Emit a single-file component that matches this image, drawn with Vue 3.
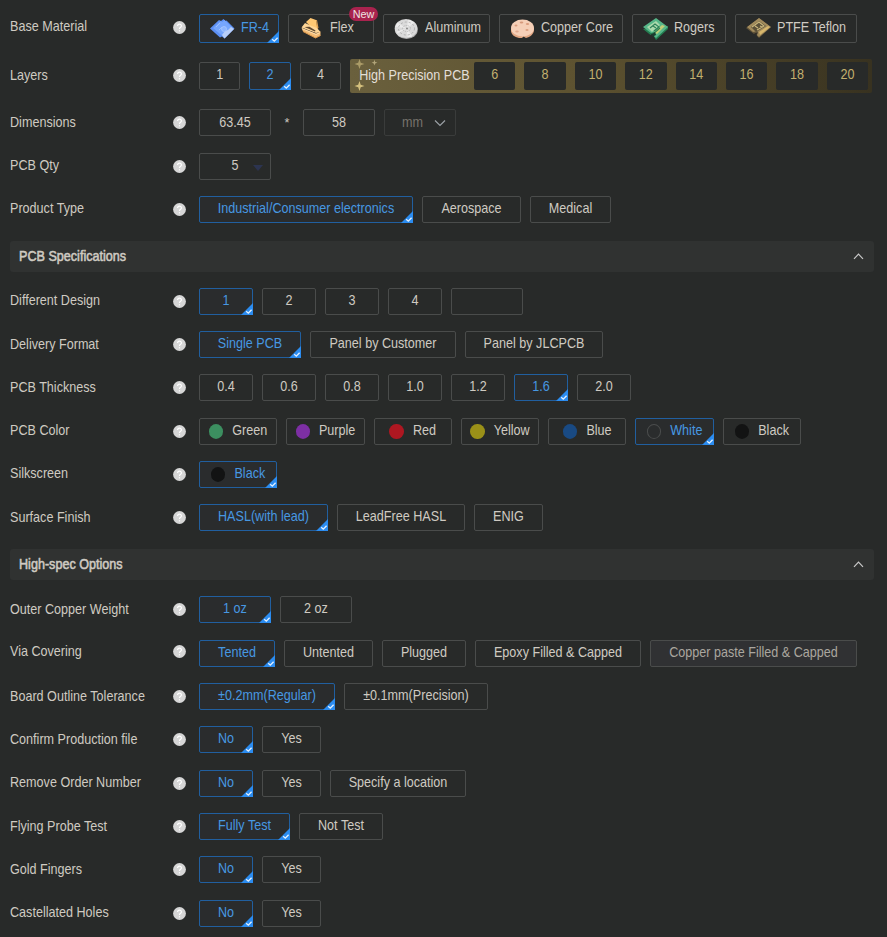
<script setup>
const list = (active, items) => items.map(([text, width, extra]) => ({ text, width, active: text === active, ...extra }))
const c = (swatch) => ({ swatch })

const materials = list('FR-4', [
  ['FR-4', 80, { icon: 'fr4' }],
  ['Flex', 86, { icon: 'flex', badge: 'New' }],
  ['Aluminum', 107, { icon: 'aluminum' }],
  ['Copper Core', 124, { icon: 'copper' }],
  ['Rogers', 94, { icon: 'rogers' }],
  ['PTFE Teflon', 122, { icon: 'ptfe' }]
])
const layers = list('2', [['1', 41.4], ['2', 41.4], ['4', 41.4]])
const precisionLayers = [6, 8, 10, 12, 14, 16, 18, 20]

const sections = [
  {
    key: 'basic',
    rows: [
      { label: 'Base Material', kind: 'material', options: materials },
      { label: 'Layers', kind: 'layers', options: layers },
      { label: 'Dimensions', kind: 'dimensions', options: [] },
      { label: 'PCB Qty', kind: 'qty', options: [] },
      {
        label: 'Product Type',
        kind: 'type',
        options: list('Industrial/Consumer electronics', [['Industrial/Consumer electronics', 214], ['Aerospace', 99], ['Medical', 81]])
      }
    ]
  },
  {
    key: 'spec',
    title: 'PCB Specifications',
    rows: [
      { label: 'Different Design', kind: 'design', options: list('1', [['1', 54], ['2', 54], ['3', 54], ['4', 54], ['', 72]]) },
      { label: 'Delivery Format', options: list('Single PCB', [['Single PCB', 102], ['Panel by Customer', 146], ['Panel by JLCPCB', 138]]) },
      { label: 'PCB Thickness', options: list('1.6', ['0.4', '0.6', '0.8', '1.0', '1.2', '1.6', '2.0'].map((t) => [t, 54])) },
      {
        label: 'PCB Color',
        options: list('White', [
          ['Green', 78.3, c('green')],
          ['Purple', 78.3, c('purple')],
          ['Red', 78.3, c('red')],
          ['Yellow', 78.3, c('yellow')],
          ['Blue', 78.3, c('blue')],
          ['White', 78.3, c('clear')],
          ['Black', 78.3, c('black')]
        ])
      },
      { label: 'Silkscreen', options: list('Black', [['Black', 78.3, c('black')]]) },
      { label: 'Surface Finish', options: list('HASL(with lead)', [['HASL(with lead)', 129], ['LeadFree HASL', 128], ['ENIG', 69]]) }
    ]
  },
  {
    key: 'high',
    title: 'High-spec Options',
    rows: [
      { label: 'Outer Copper Weight', options: list('1 oz', [['1 oz', 72], ['2 oz', 72]]) },
      {
        label: 'Via Covering',
        kind: 'via',
        options: list('Tented', [
          ['Tented', 76],
          ['Untented', 89],
          ['Plugged', 84],
          ['Epoxy Filled & Capped', 166],
          ['Copper paste Filled & Capped', 207, { muted: true }]
        ])
      },
      { label: 'Board Outline Tolerance', options: list('±0.2mm(Regular)', [['±0.2mm(Regular)', 136], ['±0.1mm(Precision)', 144]]) },
      { label: 'Confirm Production file', options: list('No', [['No', 54], ['Yes', 59]]) },
      { label: 'Remove Order Number', options: list('No', [['No', 54], ['Yes', 59], ['Specify a location', 136]]) },
      { label: 'Flying Probe Test', options: list('Fully Test', [['Fully Test', 91], ['Not Test', 84]]) },
      { label: 'Gold Fingers', options: list('No', [['No', 54], ['Yes', 59]]) },
      { label: 'Castellated Holes', options: list('No', [['No', 54], ['Yes', 59]]) }
    ]
  }
]
</script>

<template>
  <main class="form">
    <section v-for="section in sections" :key="section.key" :class="['section', section.key]">
      <header v-if="section.title" class="bar">
        <h2>{{ section.title }}</h2>
        <svg class="fold" width="11" height="7" viewBox="0 0 11 7"><path d="M1 5.8 5.5 1.2 10 5.8" /></svg>
      </header>
      <div v-for="row in section.rows" :key="row.label" :class="['row', row.kind]">
        <span class="label">{{ row.label }}</span>
        <svg class="help" width="13" height="13" viewBox="0 0 13 13">
          <circle cx="6.5" cy="6.5" r="6.4" />
          <path d="M4.6 5.1C4.6 2.5 8.5 2.6 8.4 5 8.3 6.4 6.5 6.3 6.5 8" />
          <path d="M6.5 9.2v1.2" />
        </svg>
        <div class="options">
          <div
            v-for="(o, i) in row.options"
            :key="i"
            :class="['option', { active: o.active, muted: o.muted }]"
            :style="{ width: o.width + 'px' }"
          >
            <svg v-if="o.icon" class="material-icon" width="27" height="22" viewBox="0 0 27 22">
              <g v-if="o.icon === 'fr4'">
                <path d="M1 10.500 10 2l2 1 2.500-2 2 2 1-.5 8 8-10 10-2.500-2-2 1z" fill="#5c8ff4" />
                <path d="m4 10 7.500-7 2 1 2-2 8 8-9 9z" fill="#76a6fd" />
                <path d="m13 17 3-4 3-1 3-3 3 2-9.500 9.500z" fill="#b9cff9" />
                <path d="m7 9 4-4m-1 7 3-3" stroke="#9dc0ff" fill="none" />
                <circle cx="15" cy="11" r="2.500" fill="#8cb5ff" stroke="#a8c8ff" stroke-width=".8" />
              </g>
              <g v-else-if="o.icon === 'flex'">
                <path d="M8 4 12.500 0 18 2l1.500 9-7-2.500z" fill="#ffc873" />
                <path d="m18 2 1 0 1.500 8-1.500 1z" fill="#e0a256" />
                <path d="M3.500 9.500 7 5l5.500 2.500L19 10l3.500 4-4.500 1z" fill="#ffd697" />
                <path d="m6.500 9 5-.2 6 3.800-.5 1z" fill="#5e4830" />
                <path d="M3.500 10 18 15.500l4.500-2v4l-5 2.500L5 13.500z" fill="#f4bc76" />
                <path d="m5 13.500 12.500 6.500 5-2.500" stroke="#d8954a" fill="none" />
                <path d="m4 10.500 14 6 4-1.800" stroke="#ffe3b6" stroke-width=".8" fill="none" />
              </g>
              <g v-else-if="o.icon === 'aluminum'">
                <ellipse cx="13.500" cy="11.500" rx="11.3" ry="9.500" fill="#aaa" />
                <ellipse cx="13" cy="10.500" rx="11.3" ry="9.500" fill="#dadada" />
                <path d="m13.500 10.500 2-9 6 3zm0 0-9-6-2 4zm0 0 6 8-5 1zm0 0-9 5-1-2z" fill="#f4f4f4" opacity=".7" />
                <ellipse cx="13.500" cy="10.500" rx="8" ry="6.500" fill="none" stroke="#a5a5a5" stroke-width=".8" stroke-dasharray="2 2" />
                <ellipse cx="13.500" cy="10.500" rx="4" ry="3" fill="none" stroke="#aaa" stroke-width=".8" stroke-dasharray="1 1" />
                <circle cx="14" cy="10.500" r="1" fill="#888" />
              </g>
              <g v-else-if="o.icon === 'copper'">
                <path d="M2 10.500v3C3 18 8 20.500 13 20l1.500-1.500L17 20c4-.8 8-4 8-8v-2z" fill="#e2a783" />
                <ellipse cx="13.500" cy="10" rx="11.500" ry="8.500" fill="#f5cfb7" />
                <ellipse cx="12.500" cy="4.500" rx="1.800" ry="1" fill="#d5997b" />
                <ellipse cx="18.500" cy="6" rx="1.700" ry="1.100" fill="#da9c7c" />
                <ellipse cx="7" cy="7.500" rx="1.500" ry="1" fill="#d99c7d" />
                <ellipse cx="18" cy="12" rx="1.600" ry="1" fill="#dda182" />
                <ellipse cx="8" cy="13.500" rx="1.800" ry="1" fill="#e1a98d" />
              </g>
              <g v-else-if="o.icon === 'rogers'">
                <path d="m1 11 7.500 6 2-1.500 1.500 3 2 3.500 12-11v-3z" fill="#237d50" />
                <path d="M1 9 14 0l12 9-12 11-3-3 2-3-4 1z" fill="#57b789" />
                <path d="m5 9 9-6 4 4-8 7z" fill="#abd9ac" />
                <path d="m15 16 8-8-3-1-8 7z" fill="#c1cf78" />
                <path d="m8 10 5-4 4 3-5 4m-1-5 3 2m-3 6 7-6" stroke="#2c8058" stroke-width="1.1" fill="none" />
                <path d="m9 17 4-3 1 3-3 1.500z" fill="#1b3c2e" />
              </g>
              <g v-else>
                <path d="m1 10 8 6 2-1 1 3 2 2L26 9 14 0z" fill="#5f5239" />
                <path d="M2 9 14 0l12 9-12 10-3-3 2-3-5 1z" fill="#a28b5c" />
                <path d="m6 9 8-6 7 5-10 6z" fill="#5b5038" />
                <path d="m7 9 7-5 5 4-7 4m-2-4 3 2m2-2 2 1" stroke="#cbb77d" stroke-width="1.1" fill="none" />
                <path d="m15 17 10-8-2-1-9 6z" fill="#d7b66b" />
                <path d="m9 16 4-2-1 3z" fill="#302c25" />
              </g>
            </svg>
            <i v-if="o.swatch" :class="['swatch', o.swatch]"></i>
            <span class="text">{{ o.text }}</span>
            <span v-if="o.badge" class="badge">{{ o.badge }}</span>
            <svg v-if="o.active" class="tick" width="12" height="12" viewBox="0 0 12 12">
              <path class="corner" d="M0 12 12 0v12z" />
              <path class="mark" d="M5.200 8.300 7.300 10.200 10.600 6.800" />
            </svg>
          </div>

          <div v-if="row.kind === 'layers'" class="precision">
            <svg class="stars" width="28" height="34" viewBox="0 0 28 34">
              <path d="M9.5 0l1.2 3.7L14.5 5l-3.8 1.2L9.5 10 8.2 6.2 4.5 5l3.7-1.3z" fill="#aa9b67" />
              <path d="M24.5.8l.7 2.1 2.2.7-2.2.8-.7 2.1-.8-2.1-2.1-.8 2.1-.7z" fill="#b2a57a" />
              <path d="M9.5 22l1.2 3.7 3.8 1.3-3.8 1.2L9.500 32l-1.3-3.8L4.5 27l3.7-1.3z" fill="#d4c07d" />
            </svg>
            <span class="text title">High Precision PCB</span>
            <div class="chips">
              <div v-for="n in precisionLayers" :key="n" class="chip"><span class="text">{{ n }}</span></div>
            </div>
          </div>

          <template v-if="row.kind === 'dimensions'">
            <div class="option field"><span class="text">63.45</span></div>
            <span class="times">*</span>
            <div class="option field"><span class="text">58</span></div>
            <div class="option field unit">
              <span class="text">mm</span>
              <svg width="12" height="8" viewBox="0 0 12 8"><path d="M1 1.5 6 6.5 11 1.5" /></svg>
            </div>
          </template>

          <div v-if="row.kind === 'qty'" class="option field quantity">
            <span class="text">5</span>
            <i class="caret"></i>
          </div>
        </div>
      </div>
    </section>
  </main>
</template>

<style>
body {
  margin: 0;
  background: #282a29;
}
</style>

<style scoped>
.form {
  box-sizing: border-box;
  width: 887px;
  height: 937px;
  overflow: hidden;
  padding: 14px 13px 0 10px;
  background: #282a29;
  color: #cfcac2;
  font: 12.6px/16px "Liberation Sans", Arial, sans-serif;
  white-space: nowrap;
}
.row {
  display: flex;
  align-items: center;
  height: 27px;
}
.basic .row + .row {
  margin-top: 16px;
}
.basic .row.material {
  height: 29px;
}
.basic .row.layers {
  height: 34px;
}
.basic .row.qty {
  margin-top: 17px;
}
.bar {
  display: flex;
  align-items: center;
  justify-content: space-between;
  box-sizing: border-box;
  height: 31px;
  margin-top: 18px;
  padding: 0 10px 0 9px;
  border-radius: 3px;
  background: #303231;
}
.bar h2 {
  margin: 0;
  font-size: 12.6px;
  font-weight: 400;
  -webkit-text-stroke: 0.5px #cfcac2;
}
.label,
.text,
.bar h2 {
  transform: translateY(0.7px) scaleY(1.09);
  transform-origin: 0 12.4px;
}
.label {
  transform: translateY(1px) scaleY(1.09);
}
.qty .label,
.type .label {
  transform: translateY(0.5px) scaleY(1.09);
}
.bar h2,
.material .label,
.material .text,
.layers .text {
  transform: scaleY(1.09);
}
.fold path {
  fill: none;
  stroke: #c9c9c9;
  stroke-width: 1.2;
}
.spec .bar + .row {
  margin-top: 15.95px;
}
.spec .row + .row {
  margin-top: 16.22px;
}
.high .bar + .row {
  margin-top: 16.3px;
}
.high .row + .row {
  margin-top: 16.35px;
}
.label {
  width: 163px;
  padding-bottom: 2px;
}
.material .label {
  padding-bottom: 3px;
}
.help {
  flex: none;
  margin-right: 13px;
}
.material .help,
.layers .help {
  margin-bottom: 1px;
}
.material .help {
  margin-bottom: 3px;
}
.via .label {
  padding-bottom: 5px;
}
.via .help {
  margin-bottom: 4px;
}
.help circle {
  fill: #d6d6d6;
}
.help path {
  fill: none;
  stroke: #fff;
  stroke-width: 1.2;
}
.options {
  display: flex;
  align-items: center;
  gap: 9px;
}
.option {
  position: relative;
  display: flex;
  align-items: center;
  justify-content: center;
  box-sizing: border-box;
  height: 27px;
  border: 1px solid #4a4c4b;
  border-radius: 2px;
}
.text {
  padding-bottom: 3px;
}
.option.active {
  border-color: #215f9f;
  background: #2a2c2d;
  color: #4798e2;
}
.option.muted {
  background: #303133;
  color: #aaa69f;
}
.material .option {
  justify-content: flex-start;
  height: 29px;
  padding-left: 9px;
}
.material .text {
  padding-bottom: 2px;
}
.layers .option {
  height: 28px;
}
.material-icon {
  flex: none;
  margin-right: 5px;
}
.tick {
  position: absolute;
  right: -1px;
  bottom: -1px;
}
.tick .corner {
  fill: #2b8cf0;
}
.tick .mark {
  fill: none;
  stroke: #e4f1ff;
  stroke-width: 1.3;
}
.badge {
  position: absolute;
  top: -8px;
  right: -5px;
  width: 29px;
  height: 14px;
  border-radius: 7px;
  background: #a9234e;
  color: #eee6e2;
  font-size: 10.8px;
  line-height: 14px;
  text-align: center;
}
.swatch {
  flex: none;
  box-sizing: border-box;
  width: 14.4px;
  height: 15px;
  margin-right: 9px;
  border-radius: 50%;
}
.green { background: #3c8f60; }
.purple { background: #7d2fa4; }
.red { background: #ae1721; }
.yellow { background: #9a9018; }
.blue { background: #194a83; }
.black { background: #121313; }
.clear { border: 1px solid #4b4d4d; }
.precision {
  position: relative;
  display: flex;
  align-items: center;
  box-sizing: border-box;
  width: 522px;
  height: 34px;
  padding-left: 9px;
  border-radius: 2px;
  background: linear-gradient(90deg, #6a603d 0%, #5d5230 45%, #383220 100%);
}
.stars {
  position: absolute;
  top: 0;
  left: 0;
}
.precision .title {
  position: relative;
  width: 114.8px;
  padding-bottom: 1px;
  color: #e3dfd8;
}
.chips {
  display: flex;
  gap: 9px;
}
.chip {
  display: flex;
  align-items: center;
  justify-content: center;
  width: 41.4px;
  height: 28px;
  border-radius: 2px;
  background: #282a29;
  color: #c3b06e;
}
.field {
  width: 72px;
}
.times {
  width: 14px;
  text-align: center;
}
.dimensions .text {
  padding-bottom: 1px;
}
.unit {
  gap: 11px;
  padding-left: 8px;
  border-color: #3a3c3b;
  color: #77736c;
}
.unit path {
  fill: none;
  stroke: #9aa0a5;
  stroke-width: 1.2;
}
.caret {
  position: absolute;
  top: 11px;
  right: 7px;
  border: 5px solid transparent;
  border-top: 6px solid #2c3450;
  border-bottom: 0;
}
</style>
